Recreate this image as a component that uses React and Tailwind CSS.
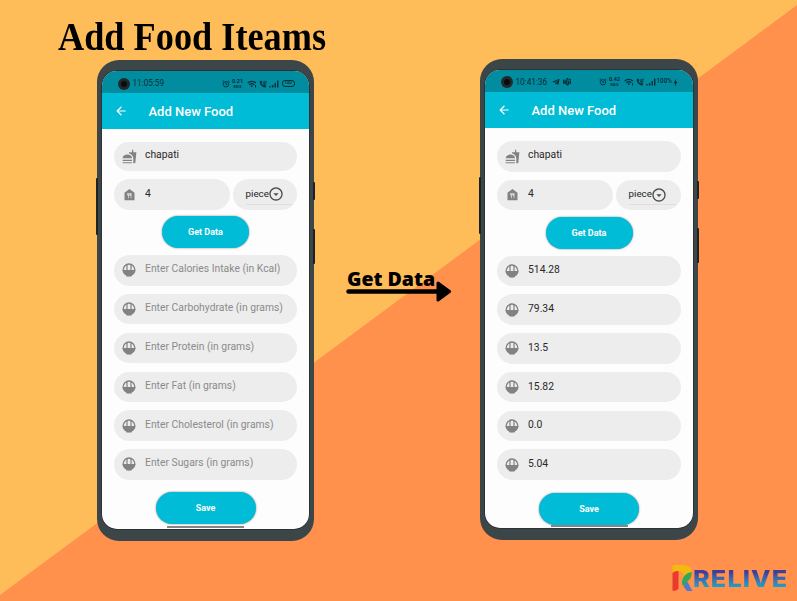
import React from "react";
import {
  MdArrowBack,
  MdFastfood,
  MdFoodBank,
  MdOutlineArrowDropDownCircle,
  MdBolt,
} from "react-icons/md";
import { FaTelegramPlane } from "react-icons/fa";
import { BsMicrosoftTeams } from "react-icons/bs";

function Backdrop() {
  return (
    <svg className="absolute inset-0" width="797" height="601" viewBox="0 0 797 601">
      <rect width="797" height="601" fill="#ffbd59" />
      <path d="M797 5L0 595V601H797Z" fill="#ff914d" />
    </svg>
  );
}

function Camera() {
  return (
    <span className="flex size-[12px] shrink-0 items-center justify-center rounded-full bg-[#22292b]">
      <span className="size-[6px] rounded-full bg-[#070d0f]" />
    </span>
  );
}

function BowlIcon() {
  return (
    <svg width="14" height="14" viewBox="0 0 14 14">
      <circle cx="7" cy="6.800" r="5.800" fill="none" stroke="currentColor" strokeWidth="1.300" />
      <path d="M0.500 7H13.500C13.300 9.500 11.800 11.500 9.600 12.500V13.500H4.400V12.500C2.200 11.500 0.700 9.500 0.500 7Z" fill="currentColor" />
      <path d="M5 1V7M9 1V7" stroke="currentColor" strokeWidth="1.200" />
    </svg>
  );
}

function AlarmIcon() {
  return (
    <svg width="8" height="8" viewBox="0 0 8 8" fill="none" stroke="currentColor" strokeWidth="0.900">
      <circle cx="4" cy="4.300" r="2.700" />
      <path d="M4 2.800V4.500H5.200M0.500 2L2 0.700M6 0.700L7.500 2" />
    </svg>
  );
}

function WifiIcon() {
  return (
    <svg width="10" height="8" viewBox="0 0 10 8" fill="none" stroke="currentColor" strokeWidth="1.300">
      <path d="M0.700 3C3 0.800 6.500 0.800 8.800 3M2.300 4.700C3.800 3.400 5.700 3.400 7.200 4.700" />
      <path d="M3.400 5.800Q4.750 4.900 6.100 5.800L4.750 7.300Z" fill="currentColor" stroke="none" />
      <path d="M8.500 5V7.500" strokeWidth="1" />
    </svg>
  );
}

function CallIcon() {
  return (
    <svg width="8" height="8" viewBox="0 0 16 16" fill="none" stroke="currentColor" strokeWidth="2">
      <path d="M2 2.5C2 9 6 14 13 14.5L13.500 11L10.500 10L9 11.500C6.500 10 5 8 4.500 6.500L6 5L5 2Z" fill="currentColor" strokeWidth="1" />
      <path d="M8 4H15M12.500 1.500L15 4M15 7.500H9M11 5.800L9 7.500L11 9.500" strokeWidth="1.800" />
    </svg>
  );
}

function SignalIcon() {
  return (
    <svg width="10" height="8" viewBox="0 0 10 8" fill="currentColor">
      <path d="M0.300 6H1.700V7.500H0.300ZM2.900 5H4.300V7.500H2.900ZM5.500 3H6.900V7.500H5.500ZM8 0.500H9.400V7.500H8Z" />
    </svg>
  );
}

function Speed({ value }) {
  return (
    <span className="flex w-[12px] flex-col items-center">
      <span className="text-[5.500px] leading-[7px] font-bold">{value}</span>
      <span className="text-[3.500px] leading-[5px] font-bold">KB/S</span>
    </span>
  );
}

function StatusBar({ time, speed, charging }) {
  return (
    <div
      className={
        "flex h-[22px] shrink-0 items-center bg-[#018ca0] pl-[15.500px] text-[#062f38] " +
        (charging ? "pt-[2px]" : "pt-[3px]")
      }
    >
      <Camera />
      <span className="ml-[3px] w-[36px] text-[8.300px] tracking-[-0.050px] whitespace-nowrap">{time}</span>
      {charging && (
        <span className="flex items-center gap-[3px]">
          <FaTelegramPlane size={8} />
          <BsMicrosoftTeams size={8} />
        </span>
      )}
      <span className={charging ? "ml-[28px] flex items-center" : "ml-[53px] flex items-center"}>
        <AlarmIcon />
        <span className="ml-[2px]"><Speed value={speed} /></span>
        <span className="ml-[3px]"><WifiIcon /></span>
        <span className="ml-[2px]"><CallIcon /></span>
        <span className="ml-[2px]"><SignalIcon /></span>
        {charging ? (
          <span className="flex items-center pl-px text-[6.300px] font-medium">
            100%
            <MdBolt size={9} className="-ml-px" />
          </span>
        ) : (
          <span className="ml-[3px] flex h-[7px] w-[13px] items-center justify-center rounded-[3px] border border-current text-[4.500px] leading-none font-medium">
            100
          </span>
        )}
      </span>
    </div>
  );
}

function Field({ icon: Icon, size = 16, className, textClass, children }) {
  return (
    <div className={"flex items-center rounded-full bg-[#ededed] pl-[7px] " + className}>
      <span className="flex w-[16px] shrink-0 justify-center text-[#828282]">
        <Icon size={size} />
      </span>
      <span className={"ml-[8px] text-[10.350px] leading-[14px] whitespace-nowrap " + textClass}>
        {children}
      </span>
    </div>
  );
}

function PillButton({ className, children }) {
  return (
    <div
      className={
        "flex shrink-0 items-center justify-center rounded-full bg-[#00bcd7] pt-[1.500px] text-[9px] font-bold text-white shadow-[0_0_2px_rgba(0,0,0,0.500)] " +
        className
      }
    >
      {children}
    </div>
  );
}

function Phone({ time, speed, charging, values, filled }) {
  return (
    <section
      className={
        "relative h-[481px] shrink-0 rounded-[22px] bg-[#3c4648] px-[5px] pt-[11px] font-[Roboto,sans-serif] " +
        (filled ? "w-[218px]" : "mt-px w-[217px]")
      }
    >
      <span className="absolute top-[118px] -left-[1px] h-[57px] w-[2px] rounded-l-[1px] bg-[#1d2325]" />
      <span className="absolute top-[122px] -right-[1px] h-[18px] w-[2px] rounded-r-[1px] bg-[#1d2325]" />
      <span className="absolute top-[169px] -right-[1px] h-[35px] w-[2px] rounded-r-[1px] bg-[#1d2325]" />
      <div className="flex h-[458px] flex-col overflow-hidden rounded-[15px] bg-[#fdfdfd] shadow-[0_0_0_0.500px_#1b2022]">
        <StatusBar time={time} speed={speed} charging={charging} />
        <div className="flex h-[36px] shrink-0 items-center bg-[#00bcd7] pl-[11.500px] text-white">
          <MdArrowBack size={14} />
          <span className="ml-[21px] text-[13px] leading-none font-medium whitespace-nowrap">Add New Food</span>
        </div>
        <div className="flex flex-col pt-[13px] pr-[12px] pl-[12px]">
          <Field
            icon={MdFastfood}
            size={15}
            className={filled ? "h-[30.500px]" : "h-[29px]"}
            textClass="pb-[3px] text-[#2a2a2a]"
          >
            chapati
          </Field>
          <div className="mt-[8px] flex h-[30.500px] gap-[3px]">
            <Field icon={MdFoodBank} size={15} className="w-[116px] shrink-0" textClass="pb-[1.500px] text-[#2a2a2a]">
              4
            </Field>
            <div className="flex flex-1 flex-col justify-end rounded-full bg-[#ededed] pr-[5px] pl-[12.500px]">
              <div className="mb-[5px] flex h-[20px] items-center border-b border-[#dedede] text-[9.800px] text-[#1f1f1f]">
                <span className="w-[22px] whitespace-nowrap">piece</span>
                <MdOutlineArrowDropDownCircle size={16} className="text-[#4d4d4d]" />
              </div>
            </div>
          </div>
          <PillButton className="mt-[6.500px] h-[32px] w-[87px] self-center">Get Data</PillButton>
          <div className={"flex flex-col gap-[8.300px] " + (filled ? "mt-[7px]" : "mt-[7.200px]")}>
            {values.map((v) => (
              <Field
                key={v}
                icon={BowlIcon}
                className="h-[30.500px]"
                textClass={filled ? "pb-[1px] text-[#2a2a2a]" : "pb-[2px] text-[#8b8b8b]"}
              >
                {v}
              </Field>
            ))}
          </div>
          <PillButton className="mt-[12.700px] h-[32px] w-[100px] self-center">Save</PillButton>
          <div className={"h-[2px] w-[77px] shrink-0 self-center bg-[#858585] " + (filled ? "mt-[0.500px]" : "mt-[2px]")} />
        </div>
      </div>
    </section>
  );
}

function Connector() {
  return (
    <div className="flex w-[166px] shrink-0 flex-col pt-[207px] pl-[32px]">
      <span className="pl-px font-['Open_Sans',sans-serif] text-[19.500px] leading-[26px] font-extrabold whitespace-nowrap text-black">
        Get Data
      </span>
      <svg className="-mt-[12px]" width="106" height="22" viewBox="0 0 106 22">
        <path d="M2.500 11.500H93" stroke="#000" strokeWidth="4.500" strokeLinecap="round" />
        <path d="M92 3L103.500 11.500L92 20Z" fill="#000" stroke="#000" strokeWidth="3" strokeLinejoin="round" />
      </svg>
    </div>
  );
}

function Logo() {
  return (
    <div className="flex items-start">
      <svg width="21" height="28" viewBox="0 0 21 28">
        <path d="M0.500 1H11C17 1 20 4 19.500 8.500L10 16C12.500 12 13 8 8 7.500L0.500 8Z" fill="#f5b80f" />
        <path d="M0.500 9Q3 6.500 6.500 7V25Q4 27 0.500 27Z" fill="#e93a2e" />
        <path d="M10 20C9.500 13 14 9 19.500 8C20 13 18 16 15 17.500C14 19 13.500 21 12.500 23.500Z" fill="#35a853" />
        <path d="M15 17L20.500 27H15L12 23C13 21 13.500 18.500 15 17Z" fill="#5578cf" />
      </svg>
      <span className="mt-[2px] origin-left scale-x-110 bg-linear-to-b from-[#403f98] from-25% to-[#15a0c8] to-80% bg-clip-text font-[Inter,sans-serif] text-[23px] leading-[26px] font-extrabold tracking-[1px] text-transparent">
        RELIVE
      </span>
    </div>
  );
}

export default function App() {
  return (
    <main className="relative h-[601px] w-[797px] overflow-hidden">
      <Backdrop />
      <div className="relative flex h-full flex-col">
        <header className="h-[59px] shrink-0 pt-[15px] pl-[58px]">
          <h1 className="origin-left scale-x-[0.93] font-['Liberation_Serif',serif] text-[39px] leading-[44px] font-bold whitespace-nowrap text-black">
            Add Food Iteams
          </h1>
        </header>
        <div className="flex h-[505px] shrink-0 pl-[97px]">
          <Phone
            time="11:05:59"
            speed="0.21"
            values={[
              "Enter Calories Intake (in Kcal)",
              "Enter Carbohydrate (in grams)",
              "Enter Protein (in grams)",
              "Enter Fat (in grams)",
              "Enter Cholesterol (in grams)",
              "Enter Sugars (in grams)",
            ]}
          />
          <Connector />
          <Phone
            time="10:41:36"
            speed="0.42"
            charging
            filled
            values={["514.28", "79.34", "13.5", "15.82", "0.0", "5.04"]}
          />
        </div>
        <footer className="pl-[672px]">
          <Logo />
        </footer>
      </div>
    </main>
  );
}
